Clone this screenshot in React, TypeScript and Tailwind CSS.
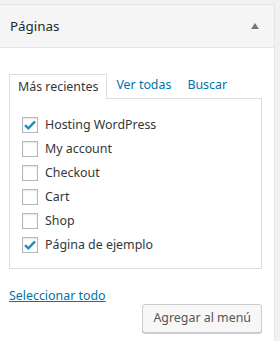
import React from "react";

const items = [
  { label: "Hosting WordPress", checked: true },
  { label: "My account", checked: false },
  { label: "Checkout", checked: false },
  { label: "Cart", checked: false },
  { label: "Shop", checked: false },
  { label: "Página de ejemplo", checked: true },
];

function Box({ checked }: { checked: boolean }) {
  return (
    <span className="w-4 h-4 shrink-0 border border-[#b4b9be] bg-white shadow-[inset_0_1px_2px_rgba(0,0,0,0.1)] flex items-center justify-center">
      {checked && (
        <svg width="14" height="14" viewBox="0 0 14 14">
          <path d="M2 7.2 L5.4 10.4 L12 3.4" fill="none" stroke="#1e8cbe" strokeWidth="2.3" />
        </svg>
      )}
    </span>
  );
}

export default function App() {
  return (
    <div
      className="w-[280px] h-[341px] bg-[#f1f1f1] pt-[4px] text-[12.4px] text-[#32373c]"
      style={{ fontFamily: '"Segoe UI", "Noto Sans", "Liberation Sans", sans-serif' }}
    >
      <div className="w-[275px] h-[337px] bg-white border-t border-r border-[#e5e5e5] flex flex-col">
        <div className="h-[43px] bg-[#f5f5f5] border-b border-[#e5e5e5] flex items-center justify-between pl-[10px] pr-[15px]">
          <span className="text-[13.4px] text-[#23282d]">Páginas</span>
          <svg width="8" height="6" viewBox="0 0 8 6">
            <path d="M0 6 L4 0 L8 6 Z" fill="#72777c" />
          </svg>
        </div>
        <div className="pl-[9px] pr-[12px] pt-[25px]">
          <div className="flex items-end h-[25px]">
            <div className="h-[25px] border border-b-0 border-[#dddddd] bg-white px-[8px] flex items-center relative top-[1px] z-10">
              Más recientes
            </div>
            <span className="text-[#0073aa] ml-[9px] h-[25px] flex items-center">Ver todas</span>
            <span className="text-[#0073aa] ml-[16px] h-[25px] flex items-center">Buscar</span>
          </div>
          <div className="border border-[#dddddd] h-[171px] pt-[14px] pl-[12px]">
            {items.map((it) => (
              <div key={it.label} className="h-[24px] flex items-center gap-[7px]">
                <Box checked={it.checked} />
                <span>{it.label}</span>
              </div>
            ))}
          </div>
          <div className="mt-[19px] leading-[16px] text-[#0073aa] underline">Seleccionar todo</div>
          <div className="flex justify-end">
            <button className="h-[29px] px-[10px] border border-[#cccccc] bg-[#f7f7f7] rounded-[3px] shadow-[0_1px_0_#cccccc] text-[#555555] text-[12.4px]">
              Agregar al menú
            </button>
          </div>
        </div>
      </div>
    </div>
  );
}
